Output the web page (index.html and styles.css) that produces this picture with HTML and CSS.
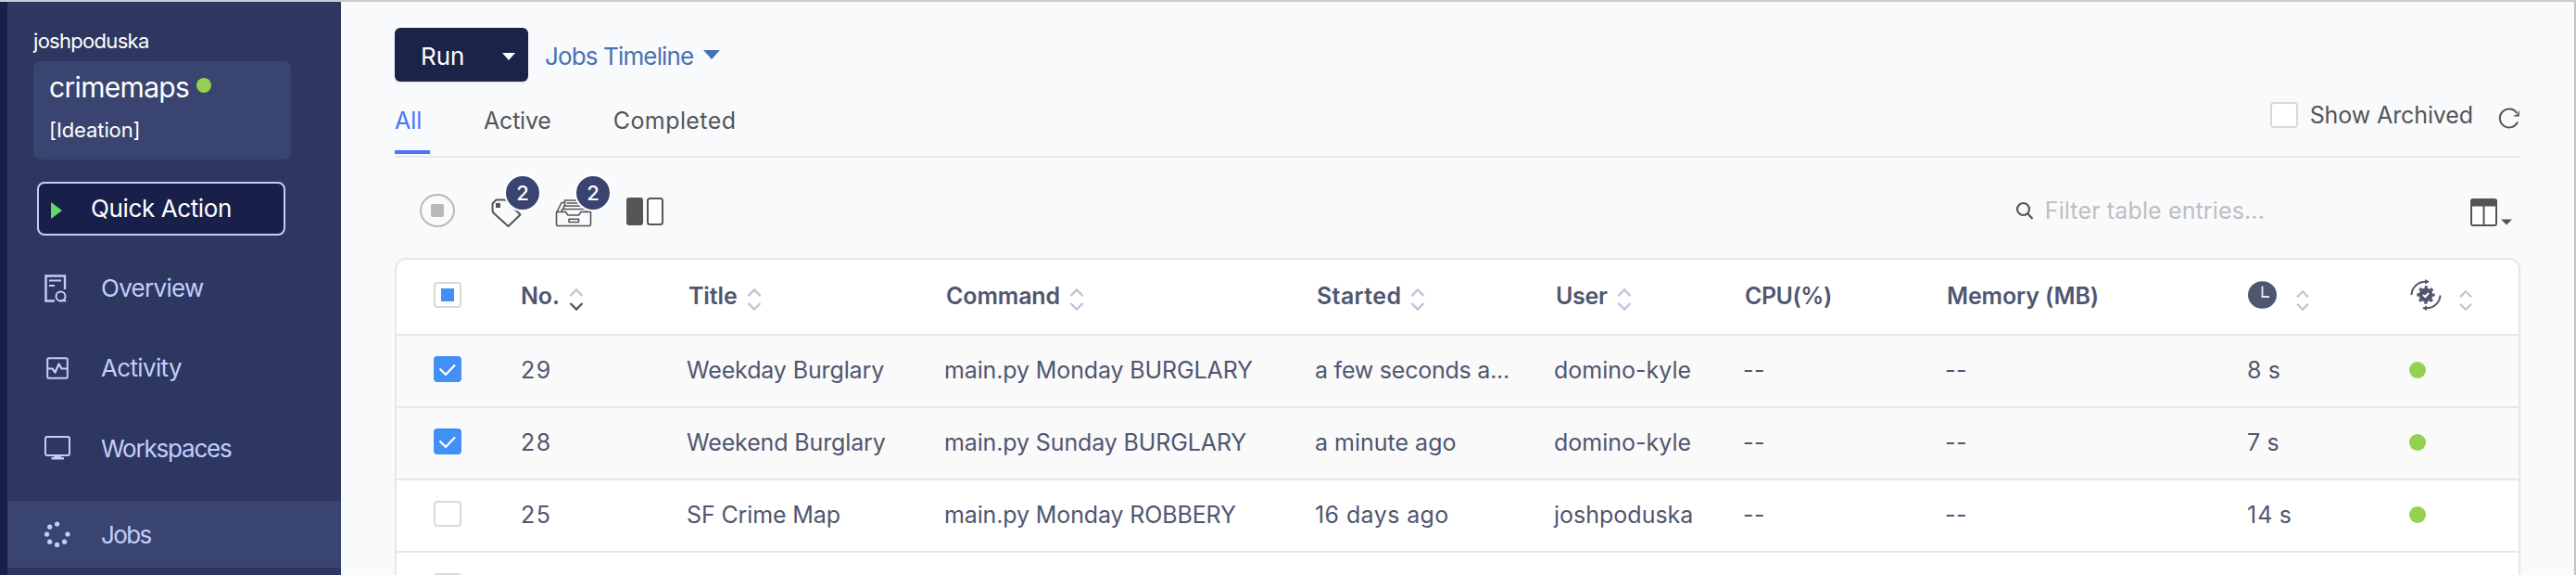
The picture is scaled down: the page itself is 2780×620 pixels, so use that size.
FILE: index.html
```
<!DOCTYPE html>
<html lang="en">
<head>
<meta charset="utf-8">
<title>Jobs</title>
<link rel="stylesheet" href="styles.css">
</head>
<body>
<svg class="defs" width="0" height="0">
  <symbol id="sort" viewBox="0 0 16 26">
    <path class="up" d="M1.5 9 8 2.5 14.5 9"/>
    <path class="down" d="M1.5 17 8 23.5 14.5 17"/>
  </symbol>
  <symbol id="tick" viewBox="0 0 30 28">
    <path d="M6.5 13.5 13 20 23 9.5" fill="none" stroke="#fff" stroke-width="2.2"/>
  </symbol>
</svg>
<div class="app">
  <aside class="sidebar">
    <div class="owner">joshpoduska</div>
    <div class="project">
      <div class="project-name"><span>crimemaps</span><i class="status"></i></div>
      <div class="stage">[Ideation]</div>
    </div>
    <button class="quick">
      <svg width="12" height="18" viewBox="0 0 12 18"><path d="M0 0 12 9 0 18z" fill="#63d86b"/></svg>
      <span>Quick Action</span>
    </button>
    <nav class="nav">
      <a class="nav-item overview">
        <svg width="28" height="32" viewBox="0 0 28 32" fill="none" stroke="#c2cefb" stroke-width="2">
          <path d="M11 29.5H1.5V2.5H22V17" stroke-width="2.4"/><path d="M5 7.5H18M5 13H11" />
          <circle cx="17.5" cy="24.5" r="5"/><path d="M17 29.2H23M20.5 27.5 23 30"/>
        </svg><span>Overview</span>
      </a>
      <a class="nav-item activity">
        <svg width="28" height="28" viewBox="0 0 28 28" fill="none" stroke="#c2cefb" stroke-width="2" stroke-linejoin="round">
          <rect x="3.2" y="3.2" width="21.6" height="21.6" rx="1.5"/><path d="M3 14.5H8.5L11.5 18.5 15.5 9.5 18.5 14.5H25" stroke-width="2.2"/>
        </svg><span>Activity</span>
      </a>
      <a class="nav-item workspaces">
        <svg width="28" height="28" viewBox="0 0 28 28" fill="none" stroke="#c2cefb" stroke-width="2">
          <rect x="1" y="2" width="26" height="20" rx="2"/><path d="M11 22H17L18 24H21V26.5H7.500V24H10z" fill="#c2cefb" stroke="none"/>
        </svg><span>Workspaces</span>
      </a>
      <a class="nav-item jobs">
        <svg width="28" height="28" viewBox="0 0 28 28" fill="#c2cefb">
          <circle cx="13.600" cy="3" r="2.600"/><circle cx="5.700" cy="6.200" r="2.600"/><circle cx="2.600" cy="14" r="2.600"/><circle cx="5.700" cy="22.200" r="2.600"/>
          <circle cx="13.600" cy="25.400" r="2.600"/><circle cx="21.600" cy="22.200" r="2.600"/><circle cx="25" cy="14" r="2.600"/>
        </svg><span>Jobs</span>
      </a>
    </nav>
  </aside>

  <main class="main">
    <div class="actions">
      <button class="run"><span>Run</span><svg width="14" height="8" viewBox="0 0 14 8"><path d="M0 0H14L7 8z" fill="#fff"/></svg></button>
      <a class="timeline"><span>Jobs Timeline</span><svg width="18" height="10" viewBox="0 0 18 10"><path d="M0 0H18L9 10z" fill="#4672b4"/></svg></a>
    </div>

    <div class="tabs">
      <a class="tab tab-all"><span>All</span></a>
      <a class="tab tab-active"><span>Active</span></a>
      <a class="tab tab-completed"><span>Completed</span></a>
      <div class="tabs-right">
        <i class="box"></i><span class="archived">Show Archived</span>
        <svg width="24" height="24" viewBox="0 0 24 24" fill="none" stroke="#555" stroke-width="2"><path d="M20.300 6.200A10 10 0 1 0 21 15.500"/><path d="M22.800 2.500V9.500H16.200L18.500 7.800H20.500z" fill="#555" stroke="none"/></svg>
      </div>
    </div>

    <div class="toolbar">
      <svg class="stop" width="38" height="38" viewBox="0 0 38 38"><ellipse cx="19" cy="19" rx="18" ry="17" fill="none" stroke="#b9b9bb" stroke-width="2"/><rect x="12" y="12" width="14" height="14" rx="2" fill="#b9b9bb"/></svg>
      <div class="tool tag">
        <svg width="34" height="34" viewBox="0 0 34 34" fill="none" stroke="#555" stroke-width="2" stroke-linejoin="round"><path d="M1.500 6.500 5.500 2.500H14Q16 2.500 17.500 4L31.500 18.500 18.500 31 3 17Q1.500 15.500 1.500 13z"/><path d="M5 6H10V11H5z" fill="#555" stroke="none"/></svg>
        <b class="badge">2</b>
      </div>
      <div class="tool archive">
        <svg width="40" height="34" viewBox="0 0 40 34" fill="none" stroke="#555" stroke-width="1.600" stroke-linejoin="round"><path d="M1.500 15.500H11.500L14 19H25.500L28 15.500H38.500V29Q38.500 30.500 37 30.500H3Q1.500 30.500 1.500 29z"/><path d="M15 23.300H25.500V26.500H15zM2 15.500 7 5.500H10M33 5.500 38 15.500M10.500 9V3H31V9M9.500 12.500V9H32.500V12.500M7.500 15.500V12.500H34V15.500M12.500 6H30"/></svg>
        <b class="badge">2</b>
      </div>
      <svg class="compare" width="40" height="30" viewBox="0 0 40 30"><rect width="18" height="30" rx="3" fill="#555"/><rect x="23" y="1" width="16" height="28" rx="2.500" fill="#fff" stroke="#555" stroke-width="2"/></svg>
      <div class="search">
        <svg width="20" height="20" viewBox="0 0 20 20" fill="none" stroke="#555" stroke-width="2.200"><circle cx="8.500" cy="8.500" r="6.500"/><path d="M13 13 18.500 19"/></svg>
        <span>Filter table entries...</span>
      </div>
      <svg class="columns" width="46" height="30" viewBox="0 0 46 30"><rect x="1" y="1" width="27" height="28" rx="2" fill="#fff" stroke="#555" stroke-width="2"/><path d="M1 1H28V8.500H1zM13.500 8H15.500V29H13.500z" fill="#555"/><path d="M33 22.500H45L39 28.500z" fill="#555"/></svg>
    </div>

    <section class="table">
      <div class="row head">
        <div class="check"><i class="box some"></i></div>
        <div class="cell head-no"><span>No.</span><svg class="sort desc"><use href="#sort"/></svg></div>
        <div class="cell"><span>Title</span><svg class="sort"><use href="#sort"/></svg></div>
        <div class="cell"><span>Command</span><svg class="sort"><use href="#sort"/></svg></div>
        <div class="cell"><span class="h-started">Started</span><svg class="sort"><use href="#sort"/></svg></div>
        <div class="cell"><span class="h-user">User</span><svg class="sort"><use href="#sort"/></svg></div>
        <div class="cell"><span class="h-cpu">CPU(%)</span></div>
        <div class="cell"><span>Memory (MB)</span></div>
        <div class="cell icon-head"><svg width="31" height="30" viewBox="0 0 31 30"><ellipse cx="15.500" cy="15" rx="15.500" ry="14.800" fill="#50566f"/><path d="M15.500 5.500V17H23" fill="none" stroke="#e8e9ee" stroke-width="1.800"/></svg><svg class="sort short"><use href="#sort"/></svg></div>
        <div class="cell icon-head state-head"><svg width="34" height="34" viewBox="0 0 34 34"><g fill="none" stroke="#50566f" stroke-width="2"><path d="M1.500 17A15 14.500 0 0 1 17 2.800"/><path d="M32.500 17.500A15 14.500 0 0 1 17 31.200"/><circle cx="17" cy="17" r="8.200" stroke-width="3" stroke-dasharray="3.200 3.240" stroke-dashoffset="1.600"/></g><path d="M16 0 21 2.800 16 5.600zM18 28.400 13 31.200 18 34z" fill="#50566f"/><circle cx="17" cy="17" r="7.500" fill="#50566f"/><path d="M14 17 16.300 19 20 15" fill="none" stroke="#fff" stroke-width="2.200"/></svg><svg class="sort short"><use href="#sort"/></svg></div>
      </div>
      <div class="row selected">
        <div class="check"><svg class="box checked"><use href="#tick"/></svg></div>
        <div class="cell num">29</div><div class="cell">Weekday Burglary</div><div class="cell">main.py Monday BURGLARY</div><div class="cell few">a few seconds a...</div><div class="cell user">domino-kyle</div><div class="cell dash">--</div><div class="cell dash">--</div><div class="cell time">8 s</div><div class="cell"><i class="dot"></i></div>
      </div>
      <div class="row selected">
        <div class="check"><svg class="box checked"><use href="#tick"/></svg></div>
        <div class="cell num">28</div><div class="cell">Weekend Burglary</div><div class="cell">main.py Sunday BURGLARY</div><div class="cell ago">a minute ago</div><div class="cell user">domino-kyle</div><div class="cell dash">--</div><div class="cell dash">--</div><div class="cell time">7 s</div><div class="cell"><i class="dot"></i></div>
      </div>
      <div class="row">
        <div class="check"><i class="box"></i></div>
        <div class="cell num">25</div><div class="cell">SF Crime Map</div><div class="cell">main.py Monday ROBBERY</div><div class="cell days">16 days ago</div><div class="cell user">joshpoduska</div><div class="cell dash">--</div><div class="cell dash">--</div><div class="cell time">14 s</div><div class="cell"><i class="dot"></i></div>
      </div>
      <div class="row">
        <div class="check"><i class="box"></i></div>
      </div>
    </section>
  </main>
</div>
</body>
</html>
```
FILE: styles.css
```
* { box-sizing: border-box; }
body { margin: 0; font-family: Inter, "Liberation Sans", sans-serif; font-size: 25px; line-height: 30px; color: #50566f; }
button { font: inherit; padding: 0; border: 0; color: #fff; }
i, b { font-style: normal; font-weight: 400; }
svg { display: block; flex: none; }
span { white-space: nowrap; }
.defs { position: absolute; }
.app { display: flex; width: 2780px; height: 620px; overflow: hidden; border-top: 2px solid #c9cccd; border-right: 2px solid #c3c5c7; background: #f9fafc; }

/* Sidebar */
.sidebar { flex: none; width: 368px; height: 618px; overflow: hidden; border-left: 8px solid #18204a; background: #2d3760; padding-top: 28px; }
.owner { padding-left: 28px; color: #fff; font-size: 22px; line-height: 28px; letter-spacing: -0.7px; }
.project { width: 278px; height: 106px; margin: 8px 0 0 28px; padding: 10px 0 0 17px; border-radius: 8px; background: #3a4470; color: #fff; }
.project-name { display: flex; align-items: center; font-size: 30px; line-height: 36px; letter-spacing: -0.68px; }
.status { width: 16px; height: 16px; margin: 0 0 4px 8px; border-radius: 50%; background: #94d14f; }
.stage { margin-top: 14px; font-size: 22px; line-height: 28px; letter-spacing: -0.1px; }
.quick { display: flex; align-items: center; gap: 31px; width: 268px; height: 58px; margin: 24px 0 14px 32px; padding: 3px 0 0 13px; border: 2px solid #c2cefb; border-radius: 8px; background: #18204a; font-size: 26px; letter-spacing: -0.38px; }
.quick span { padding-bottom: 3px; }
.nav-item { display: flex; align-items: center; gap: 33px; height: 86px; padding-left: 40px; color: #c2cefb; font-size: 26px; }
.overview { letter-spacing: -0.7px; }
.activity { letter-spacing: -0.65px; }
.workspaces { letter-spacing: -1.2px; }
.jobs { height: 72px; margin-top: 14px; background: #3a4470; letter-spacing: -1.6px; }
.workspaces span, .jobs span { padding-top: 2px; }

/* Top actions and tabs */
.main { flex: 1; min-width: 0; padding: 28px 58px 0; }
.actions { display: flex; align-items: center; height: 58px; }
.run { display: flex; align-items: center; justify-content: space-between; width: 144px; height: 58px; padding: 4px 14px 0 28px; border-radius: 6px; background: #1a2348; font-size: 26px; box-shadow: 0 2px 3px rgba(26, 35, 72, .08); }
.timeline { display: flex; align-items: center; gap: 11px; padding: 4px 0 0 18px; color: #4672b4; font-size: 26px; letter-spacing: -0.86px; }
.timeline svg { margin-bottom: 4px; }
.tabs { display: flex; height: 82px; border-bottom: 2px solid #e6e7e9; color: #555; }
.tab { position: relative; padding-top: 27px; }
.tab-all { width: 38px; color: #4c74f6; }
.tab-all::after { content: ""; position: absolute; left: 0; bottom: 2px; width: 38px; height: 4px; background: #4c74f6; }
.tab-active { margin-left: 58px; letter-spacing: -0.2px; }
.tab-completed { margin-left: 67px; letter-spacing: .43px; }
.tabs-right { display: flex; align-items: center; height: 30px; margin: 21px 0 0 auto; }
.archived { padding: 0 27px 1px 13px; letter-spacing: -0.1px; }
.tabs-right svg { margin-top: 8px; }

/* Toolbar */
.toolbar { display: flex; align-items: center; height: 108px; padding: 6px 8px 0 27px; }
.tool { position: relative; }
.tag { margin: 5px 0 0 39px; }
.archive { margin: 5px 0 0 35px; }
.badge { position: absolute; top: -25px; width: 40px; height: 40px; border: 2px solid #fff; border-radius: 50%; background: #3a4470; color: #fff; font-size: 22px; font-weight: 500; line-height: 37px; text-align: center; }
.tag .badge { left: 14px; }
.archive .badge { left: 21px; }
.compare { margin: 2px 0 0 37px; }
.search { display: flex; align-items: center; gap: 12px; margin-left: auto; color: #bdbfc1; letter-spacing: .13px; }
.columns { margin: 4px 0 0 222px; }

/* Jobs table */
.table { height: 400px; border: 2px solid #e6e7e8; border-radius: 12px; background: #fff; overflow: hidden; }
.row { display: grid; grid-template-columns: 134px 179px 278px 400px 258px 204px 218px 326px 175px 1fr; height: 78px; border-bottom: 2px solid #e6e7e8; letter-spacing: -0.13px; }
.row.selected { background: #fafafa; }
.row.head { height: 82px; font-weight: 600; }
.check { display: flex; align-items: center; padding: 0 0 4px 40px; }
.box { width: 30px; height: 28px; border: 2px solid #d9d9d9; border-radius: 4px; background: #fff; }
.box.checked { border: 0; background: #428ff7; }
.box.some { padding: 5px 6px; background: linear-gradient(#428ff7, #428ff7) content-box; }
.cell { display: flex; align-items: center; padding-bottom: 2px; white-space: nowrap; }
.head .cell { gap: 10px; padding-left: 2px; }
.head .head-no { padding-left: 0; }
.num { letter-spacing: 1.4px; }
.few { letter-spacing: -0.23px; }
.ago, .user { letter-spacing: 0; }
.days { letter-spacing: .4px; }
.dash { letter-spacing: .4px; }
.time { letter-spacing: 1.1px; word-spacing: -2px; }
.h-started { letter-spacing: .35px; }
.h-user { letter-spacing: -0.3px; }
.h-cpu { letter-spacing: -0.48px; }
.sort { width: 16px; height: 26px; margin-top: 7px; fill: none; stroke: #bfc3d4; stroke-width: 2.400; }
.sort.desc { --down: #50566f; }
.down { stroke: var(--down, #bfc3d4); }
.head .icon-head { gap: 20px; padding: 0 0 4px 1px; }
.head .state-head { gap: 18px; }
.icon-head .sort { height: 24px; margin-top: 12px; }
.dot { width: 18px; height: 18px; border-radius: 50%; background: #94d14f; }
```
